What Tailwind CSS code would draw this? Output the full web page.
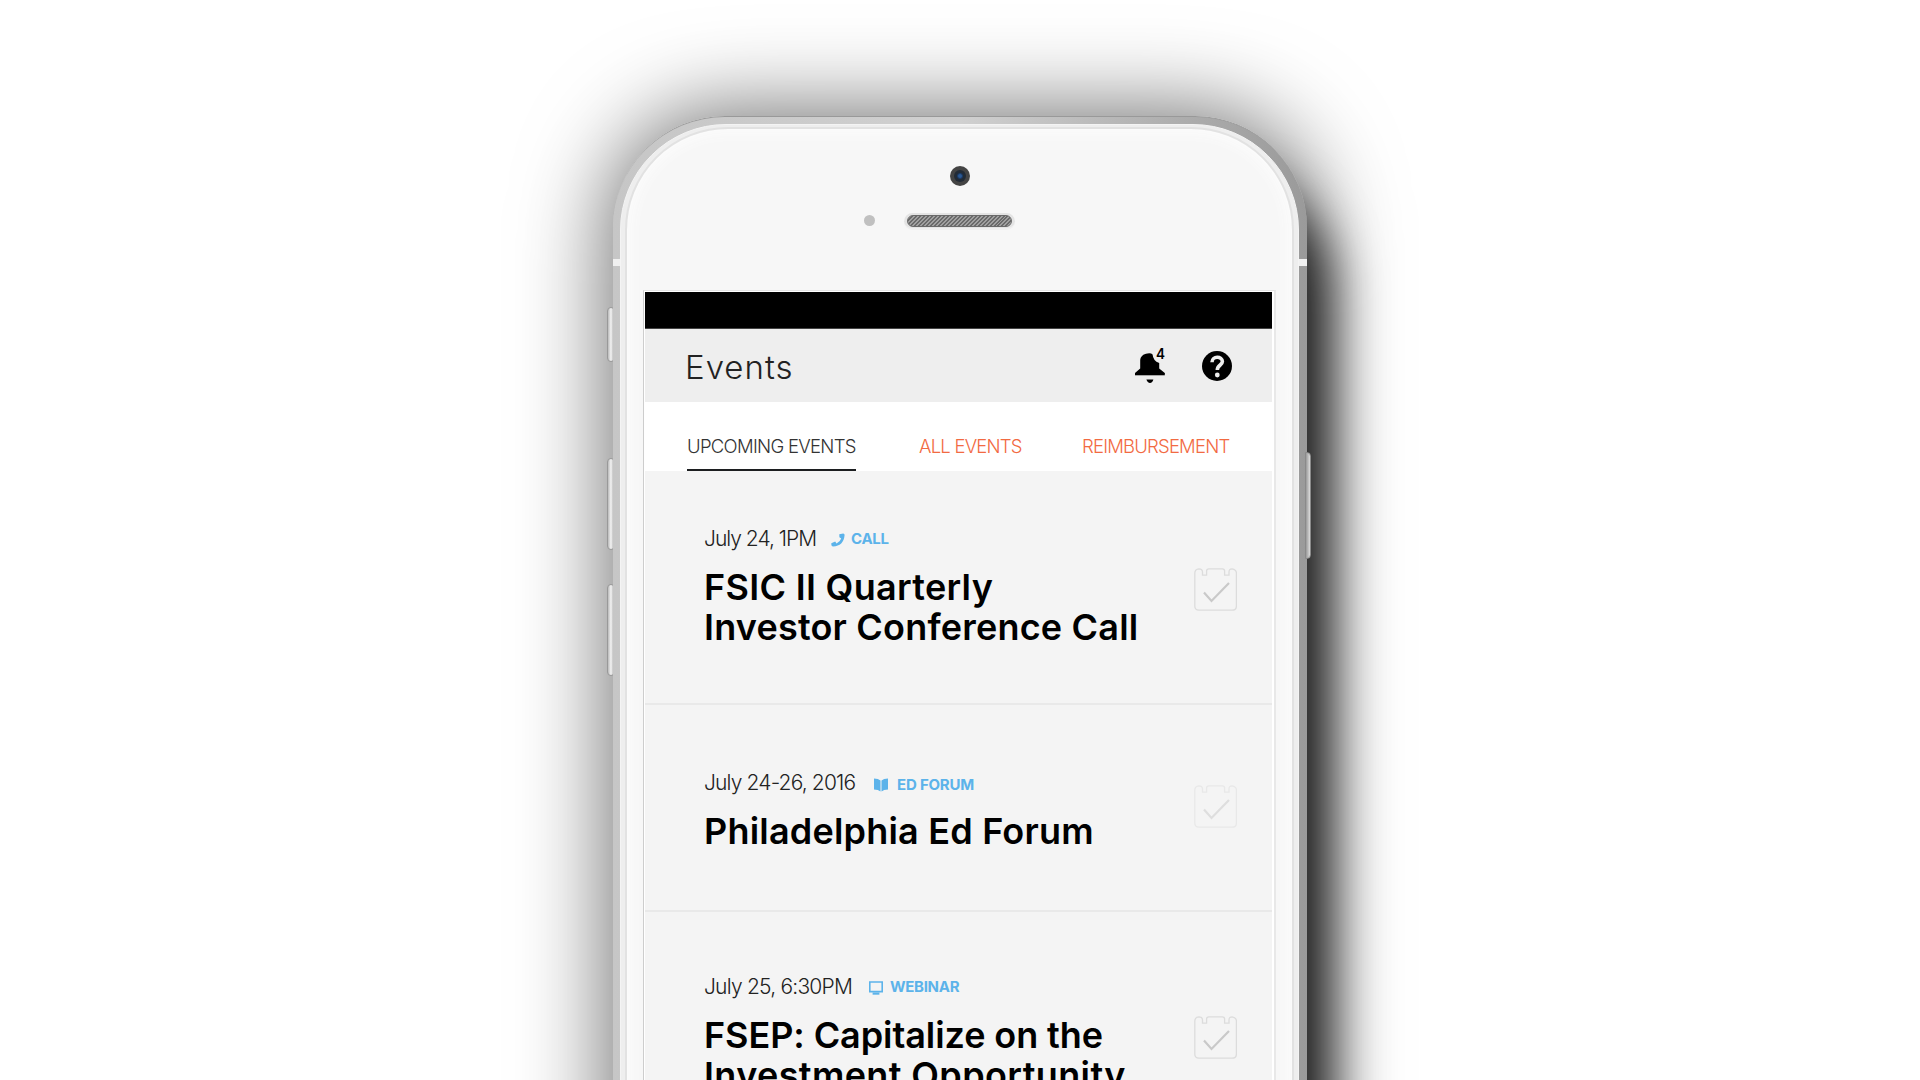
<!DOCTYPE html>
<html lang="en">
<head>
  <meta charset="UTF-8" />
  <title>Events</title>
  <script src="https://cdn.jsdelivr.net/npm/@tailwindcss/browser@4"></script>
</head>
<body class="bg-white h-screen overflow-hidden font-['Inter',sans-serif]">

  <div class="relative w-[694px] h-[964px] mx-auto mt-[116px]">
    <!-- Shadows -->
    <div class="absolute left-0 top-0 w-[694px] h-[1200px] rounded-[112px] shadow-[0_0_90px_4px_rgba(0,0,0,0.58)]"></div>
    <div class="absolute left-[360px] top-[70px] w-[357px] h-[1200px] rounded-[100px] bg-black/85 blur-[26px]"></div>

    <!-- Side buttons -->
    <div class="absolute -left-[6px] top-[191px] w-[8px] h-[55px] rounded-[4px] border border-[#999] bg-linear-to-r from-[#bbb] via-[#f4f4f4] to-[#aaa]"></div>
    <div class="absolute -left-[6px] top-[342px] w-[8px] h-[92px] rounded-[4px] border border-[#999] bg-linear-to-r from-[#bbb] via-[#f4f4f4] to-[#aaa]"></div>
    <div class="absolute -left-[6px] top-[468px] w-[8px] h-[92px] rounded-[4px] border border-[#999] bg-linear-to-r from-[#bbb] via-[#f4f4f4] to-[#aaa]"></div>

    <!-- Body -->
    <div class="relative h-[1200px] rounded-[112px] border-t border-[#999] bg-linear-to-r from-[#c6c6c6] via-[#d0d0d0] to-[#9a9a9a] pt-[7px] pl-[7px] pr-[8px]">
      <div class="absolute left-0 top-[142px] w-[8px] h-[7px] bg-[#f0f0f0]"></div>
      <div class="absolute right-0 top-[142px] w-[8px] h-[7px] bg-[#f0f0f0]"></div>

      <div class="relative h-[1180px] rounded-[106px] border border-[#f4f4f4] bg-[#eee] pt-[2px] px-[4px]">
        <div class="h-[1170px] rounded-[103px] border-2 border-[#e2e2e2] bg-[#f7f7f7] shadow-[inset_0_0_14px_4px_#fcfcfc]">

          <div class="relative h-[161px]">
            <div class="absolute left-[323px] top-[37px] size-[20px] rounded-full bg-[#444] flex items-center justify-center">
              <div class="size-[12px] rounded-full bg-[#222b36] flex items-center justify-center">
                <div class="size-[6px] rounded-full bg-[#2c5a94] border border-[#1b3a66]"></div>
              </div>
            </div>
            <div class="absolute left-[237px] top-[86px] size-[11px] rounded-full bg-[#c0c0c0]"></div>
            <div class="absolute left-[277px] top-[84px] w-[111px] h-[17px] rounded-full bg-[#e4e4e4] border-b-2 border-[#f0f0f0] px-[3px] pt-[2px]">
              <div class="h-[12px] rounded-full border border-[#6a6a6a] bg-[repeating-linear-gradient(135deg,#6a6a6a_0px,#6a6a6a_1.4px,#a0a0a0_1.4px,#a0a0a0_2.8px)]"></div>
            </div>
          </div>

          <!-- Screen -->
          <div class="ml-[16px] mr-[16px] h-[1000px] border-t border-l border-t-[#e4e4e4] border-l-[#cdcdcd] border-r-2 border-r-[#e8e8e8] bg-white pt-px pl-px pr-[2px]">
            <div class="h-[37px] bg-black border-b border-[#444]"></div>

            <header class="h-[73px] bg-[#eee] flex justify-between pl-[39px] pr-[40px]">
              <h1 class="text-[33px] leading-[73px] font-light tracking-[1px] text-[#222] mt-[2px] ml-px">Events</h1>
              <div class="flex">
                <svg class="w-[32px] h-[42px] mr-[35px] mt-[17px]" viewBox="0 0 32 42">
                  <path d="M0 27.9V27L5.2 22.6V14.5C5.2 10.4 8.4 7.8 12.5 7.4Q16 6.8 17.6 8.4Q18 14.6 24.2 17V22.6L29.8 27V27.9Z" fill="#000" />
                  <path d="M0 27.5H29.8V29.3H0Z" fill="#000" />
                  <path d="M11.4 33.6H18.4Q17.4 37 15 37Q12.6 37 11.4 33.6Z" fill="#000" />
                  <text x="21" y="13" font-family="Inter" font-size="15" font-weight="600" textLength="9" lengthAdjust="spacingAndGlyphs">4</text>
                </svg>
                <svg class="size-[30px] mt-[21.5px]" viewBox="0 0 30 30">
                  <circle cx="15" cy="15" r="15" fill="#000" />
                  <path d="M10 11.2C10 4.6 20.4 4.8 20.4 10.6C20.4 14 15.3 14.2 15.3 19" fill="none" stroke="#eee" stroke-width="3.6" />
                  <circle cx="15.3" cy="24" r="2.4" fill="#eee" />
                </svg>
              </div>
            </header>

            <nav class="h-[69px] flex text-[18.5px] leading-[26px] font-light text-[#f26a42] pl-[42px] pt-[31px] whitespace-nowrap">
              <a class="w-[169px] h-[38px] border-b-2 border-[#1c1e20] text-[#333] tracking-[-0.7px]">UPCOMING EVENTS</a>
              <a class="ml-[63px] w-[103px] tracking-[-0.78px]">ALL EVENTS</a>
              <a class="ml-[60px] tracking-[-0.8px]">REIMBURSEMENT</a>
            </nav>

            <main class="bg-[#f4f4f4] text-black h-[640px]">
              <section class="h-[234px] border-b-2 border-[#e9e9e9] flex justify-between pl-[59px] pr-[35px]">
                <div class="pt-[53px] whitespace-nowrap">
                  <div class="flex items-center h-[30px] mb-[12.5px]">
                    <span class="w-[127px] text-[21px] leading-[30px] font-light tracking-[-1px] text-[#222]">July 24, 1PM</span>
                    <svg class="w-[14px] h-[14px] mr-[6px] mt-[2px]" viewBox="0 0 14 14">
                      <path d="M8.3 1.2L12.2 0.4Q13.6 0.4 13.6 2Q12.6 13.2 2 13.4Q0.5 13.4 0.4 12L0.3 10.3L4.2 8.6L5.5 10.4Q9.2 8.6 10.2 5.4L8.4 4.2Z" fill="#5cb3ea" />
                    </svg>
                    <span class="text-[15px] font-bold tracking-[-0.3px] text-[#5cb3ea] mt-px">CALL</span>
                  </div>
                  <h2 class="text-[36px] leading-[40px] font-semibold"><span class="tracking-[0.3px]">FSIC II Quarterly</span><br><span class="tracking-[0.2px]">Investor Conference Call</span></h2>
                </div>
                <svg class="w-[43px] h-[43px] mt-[97px]" viewBox="0 0 43 43" fill="none">
                  <path d="M5 .8Q8.5 .8 8.5 4V7.2H12.6V3Q12.6 .8 14.8 .8H28.4Q30.6 .8 30.6 3V7.2H35V4Q35 .8 38 .8Q42.4 1.6 42.4 5V38Q42.4 42.2 38 42.2H5Q.8 42.2 .8 38V5Q.8 1.2 5 .8Z" stroke="#dcdcdc" stroke-width="1.3" />
                  <path d="M10 24.5L17.5 33L35 15" stroke="#c9c9c9" stroke-width="2.2" />
                </svg>
              </section>

              <section class="h-[207px] border-b-2 border-[#e9e9e9] flex justify-between pl-[59px] pr-[35px]">
                <div class="pt-[63px] whitespace-nowrap">
                  <div class="flex items-center h-[30px] mb-[12.5px]">
                    <span class="w-[170px] text-[21px] leading-[30px] font-light tracking-[-0.85px] text-[#222]">July 24-26, 2016</span>
                    <svg class="w-[14px] h-[14px] mr-[9px] mt-[4px]" viewBox="0 0 14 14" fill="#5cb3ea">
                      <path d="M0 .4Q4.4 .4 6.5 2.6V13.4Q4.4 11.6 0 11.4Z" />
                      <path d="M14 .4Q9.6 .4 7.5 2.6V13.4Q9.6 11.6 14 11.4Z" />
                    </svg>
                    <span class="text-[15px] font-bold tracking-[-0.2px] text-[#5cb3ea] mt-[4px]">ED FORUM</span>
                  </div>
                  <h2 class="text-[36px] leading-[40px] font-semibold tracking-[0.2px]">Philadelphia Ed Forum</h2>
                </div>
                <svg class="w-[43px] h-[43px] mt-[80px]" viewBox="0 0 43 43" fill="none">
                  <path d="M5 .8Q8.5 .8 8.5 4V7.2H12.6V3Q12.6 .8 14.8 .8H28.4Q30.6 .8 30.6 3V7.2H35V4Q35 .8 38 .8Q42.4 1.6 42.4 5V38Q42.4 42.2 38 42.2H5Q.8 42.2 .8 38V5Q.8 1.2 5 .8Z" stroke="#e8e8e8" stroke-width="1.3" />
                  <path d="M10 24.5L17.5 33L35 15" stroke="#dedede" stroke-width="2.2" />
                </svg>
              </section>

              <section class="flex justify-between pl-[59px] pr-[35px]">
                <div class="pt-[60px] whitespace-nowrap">
                  <div class="flex items-center h-[30px] mb-[12.5px]">
                    <span class="w-[165px] text-[21px] leading-[30px] font-light tracking-[-0.78px] text-[#222]">July 25, 6:30PM</span>
                    <svg class="w-[14px] h-[14px] mr-[7px] mt-[2px]" viewBox="0 0 14 14" fill="none">
                      <path d="M.8 1H13.2V10.6H.8Z" stroke="#5cb3ea" stroke-width="1.6" />
                      <path d="M3.6 12.6H10.4" stroke="#5cb3ea" stroke-width="2.2" />
                    </svg>
                    <span class="text-[15px] font-bold tracking-[-0.3px] text-[#5cb3ea] mt-px">WEBINAR</span>
                  </div>
                  <h2 class="text-[36px] leading-[40px] font-semibold"><span class="tracking-[-0.08px]">FSEP: Capitalize on the</span><br><span class="tracking-[0.38px]">Investment Opportunity</span></h2>
                </div>
                <svg class="w-[43px] h-[43px] mt-[104px]" viewBox="0 0 43 43" fill="none">
                  <path d="M5 .8Q8.5 .8 8.5 4V7.2H12.6V3Q12.6 .8 14.8 .8H28.4Q30.6 .8 30.6 3V7.2H35V4Q35 .8 38 .8Q42.4 1.6 42.4 5V38Q42.4 42.2 38 42.2H5Q.8 42.2 .8 38V5Q.8 1.2 5 .8Z" stroke="#dcdcdc" stroke-width="1.3" />
                  <path d="M10 24.5L17.5 33L35 15" stroke="#c9c9c9" stroke-width="2.2" />
                </svg>
              </section>
            </main>
          </div>
        </div>
      </div>
    </div>

    <!-- Power button -->
    <div class="absolute left-[692px] top-[336px] w-[6px] h-[107px] rounded-r-[4px] border border-[#8a8a8a] bg-linear-to-r from-[#999] to-[#ddd]"></div>
  </div>

</body>
</html>
